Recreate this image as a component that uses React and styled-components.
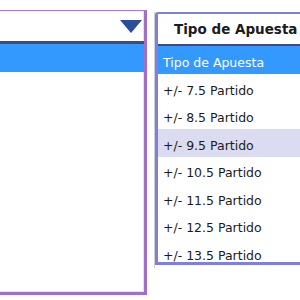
import React from "react";
import styled, { createGlobalStyle } from "styled-components";

const GlobalStyle = createGlobalStyle`
  html, body {
    margin: 0;
    padding: 0;
    background: #ffffff;
    overflow: hidden;
  }
  body {
    font-family: "DejaVu Sans", "Liberation Sans", sans-serif;
    color: #1b1b1b;
  }
`;

const Stage = styled.div`
  display: flex;
  align-items: flex-start;
  width: 300px;
  height: 300px;
  padding-top: 10px;
  box-sizing: border-box;
  overflow: hidden;
`;

//left dropdown, cut off by the page edge
const LeftSelect = styled.div`
  flex: 0 0 147px;
  height: 285px;
  box-sizing: border-box;
  border-top: 1px solid #a57ccc;
  border-right: 3px solid #a070c6;
  border-bottom: 3px solid #a070c6;
  box-shadow: inset -1px -1px 0 #e6def2;
  display: flex;
  flex-direction: column;
  background: #fff;
`;

const LeftHeader = styled.div`
  height: 30px;
  display: flex;
  align-items: center;
  justify-content: flex-end;
  padding-right: 2px;
  border-bottom: 3px solid #3c4a88;
`;

const Arrow = styled.span`
  width: 0;
  height: 0;
  border-left: 11px solid transparent;
  border-right: 11px solid transparent;
  border-top: 13px solid #2c4c9c;
`;

const Frame = styled.div`
  margin-left: 7px;
  margin-top: 2px;
  border-left: 1px solid #d0d0d0;
  padding-bottom: 3px;
  flex: 0 0 auto;
`;

const Panel = styled.div`
  width: 170px;
  box-sizing: border-box;
  border-left: 3px solid #7f7fe0;
  border-top: 2px solid #7f7fe0;
  border-bottom: 3px solid #7f7fe0;
  border-top-left-radius: 3px;
  background: #fff;
`;

const PanelHeader = styled.div`
  height: 30px;
  display: flex;
  align-items: center;
  padding-left: 16px;
  font-weight: bold;
  font-size: 13.5px;
  white-space: nowrap;
  border-bottom: 2px solid #3c4a88;
`;

const List = styled.div`
  height: 216px;
  overflow: hidden;
`;

const Option = styled.div`
  height: ${(p) => (p.first ? "28px" : "27.5px")};
  box-sizing: border-box;
  display: flex;
  align-items: center;
  padding: 5px 0 0 5px;
  font-size: 12.5px;
  white-space: nowrap;
  background: ${(p) =>
    p.selected ? "#3399ff" : p.hover ? "#dcdcf0" : "transparent"};
  color: ${(p) => (p.selected ? "#ffffff" : "#1b1b1b")};
`;

const options = [
  "+/- 7.5 Partido",
  "+/- 8.5 Partido",
  "+/- 9.5 Partido",
  "+/- 10.5 Partido",
  "+/- 11.5 Partido",
  "+/- 12.5 Partido",
  "+/- 13.5 Partido",
];

const App = () => {
  return (
    <>
      <GlobalStyle />
      <Stage>
        <LeftSelect>
          <LeftHeader>
            <Arrow />
          </LeftHeader>
          <Option selected first />
        </LeftSelect>
        <Frame>
          <Panel>
            <PanelHeader>Tipo de Apuesta</PanelHeader>
            <List>
              <Option selected first>
                Tipo de Apuesta
              </Option>
              {options.map((o) => (
                <Option key={o} hover={o === "+/- 9.5 Partido"}>
                  {o}
                </Option>
              ))}
            </List>
          </Panel>
        </Frame>
      </Stage>
    </>
  );
};

export default App;
